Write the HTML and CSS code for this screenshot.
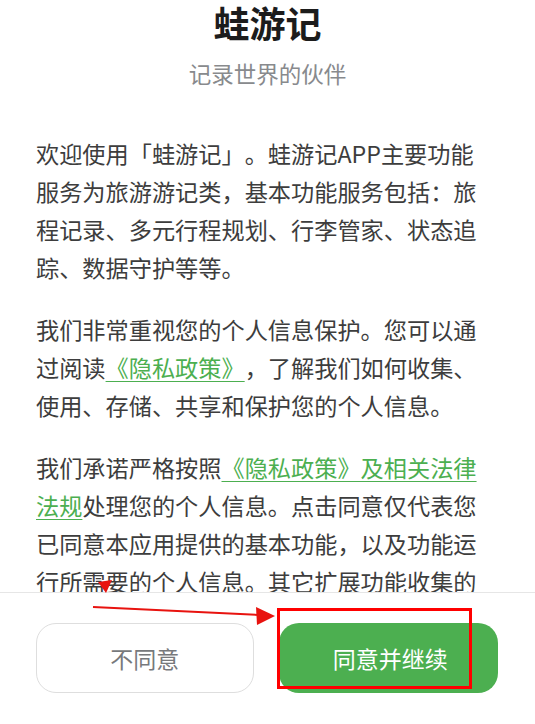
FILE: index.html
```html
<!DOCTYPE html>
<html lang="zh-CN">
<head>
<meta charset="utf-8">
<title>蛙游记</title>
<link rel="stylesheet" href="styles.css">
</head>
<body>
<div class="page">
  <main class="content">
    <header class="head">
      <h1 class="title">蛙游记</h1>
      <p class="subtitle">记录世界的伙伴</p>
    </header>
    <section class="body">
      <p class="para">欢迎使用「蛙游记」。蛙游记APP主要功能服务为旅游游记类，基本功能服务包括：旅程记录、多元行程规划、行李管家、状态追踪、数据守护等等。</p>
      <p class="para">我们非常重视您的个人信息保护。您可以通过阅读<a class="link" href="#">《隐私政策》</a>，了解我们如何收集、使用、存储、共享和保护您的个人信息。</p>
      <p class="para">我们承诺严格按照<a class="link" href="#">《隐私政策》及相关法律法规</a>处理您的个人信息。点击同意仅代表您已同意本应用提供的基本功能，以及功能运行所需要的个人信息。其它扩展功能收集的个人信息，我们将在您使用时单独征求您的同意。</p>
    </section>
  </main>
  <footer class="footer">
    <button class="btn btn-ghost" type="button">不同意</button>
    <button class="btn btn-primary" type="button">同意并继续</button>
  </footer>
  <svg class="marks" width="535" height="724" viewBox="0 0 535 724" aria-hidden="true">
    <polygon points="98,582 112,580 106,593" fill="#e8130f"/>
    <line x1="93" y1="607" x2="260" y2="615" stroke="#e8130f" stroke-width="2"/>
    <polygon points="275,616 256,607 257,625" fill="#e8130f"/>
    <rect x="278.5" y="609.5" width="192" height="78" fill="none" stroke="#f00" stroke-width="3"/>
  </svg>
</div>
</body>
</html>
```

FILE: styles.css
```css
* { box-sizing: border-box; }
html, body { margin: 0; padding: 0; background: #fff; }
body {
  font-family: "Noto Sans CJK SC", "Noto Sans", sans-serif;
  color: #3a3a3a;
  text-spacing-trim: space-all;
}
.page {
  position: relative;
  width: 535px;
  height: 724px;
  display: flex;
  flex-direction: column;
  overflow: hidden;
}
.content {
  flex: 1;
  overflow: hidden;
  min-height: 0;
}
.head {
  display: flex;
  flex-direction: column;
  align-items: center;
}
.title {
  margin: 0;
  font-size: 36px;
  line-height: 44px;
  font-weight: 700;
  color: #1c1c1c;
}
.subtitle {
  margin: 9px 0 0;
  font-size: 22.5px;
  line-height: 40px;
  color: #888a8d;
}
.body {
  width: 442px;
  margin: 41px 0 0 36px;
}
.para {
  margin: 0 0 24px;
  font-size: 23.2px;
  line-height: 38px;
  color: #3d3d3d;
}
.link {
  color: #4caf50;
  text-decoration: underline;
  text-underline-offset: 4px;
  text-decoration-thickness: 1px;
}
.footer {
  flex: none;
  height: 132px;
  border-top: 1px solid #e6e6e6;
  background: #fff;
  display: flex;
  gap: 25px;
  padding: 30px 37px 0 36px;
}
.btn {
  flex: 1;
  height: 70px;
  border-radius: 20px;
  font-family: inherit;
  font-size: 23px;
  cursor: pointer;
}
.btn-ghost {
  background: #fff;
  border: 1px solid #dedede;
  color: #77797c;
}
.btn-primary {
  background: #4caf50;
  border: none;
  color: #fff;
  padding-left: 10px;
}
.marks {
  position: absolute;
  left: 0;
  top: 0;
  pointer-events: none;
}
```
